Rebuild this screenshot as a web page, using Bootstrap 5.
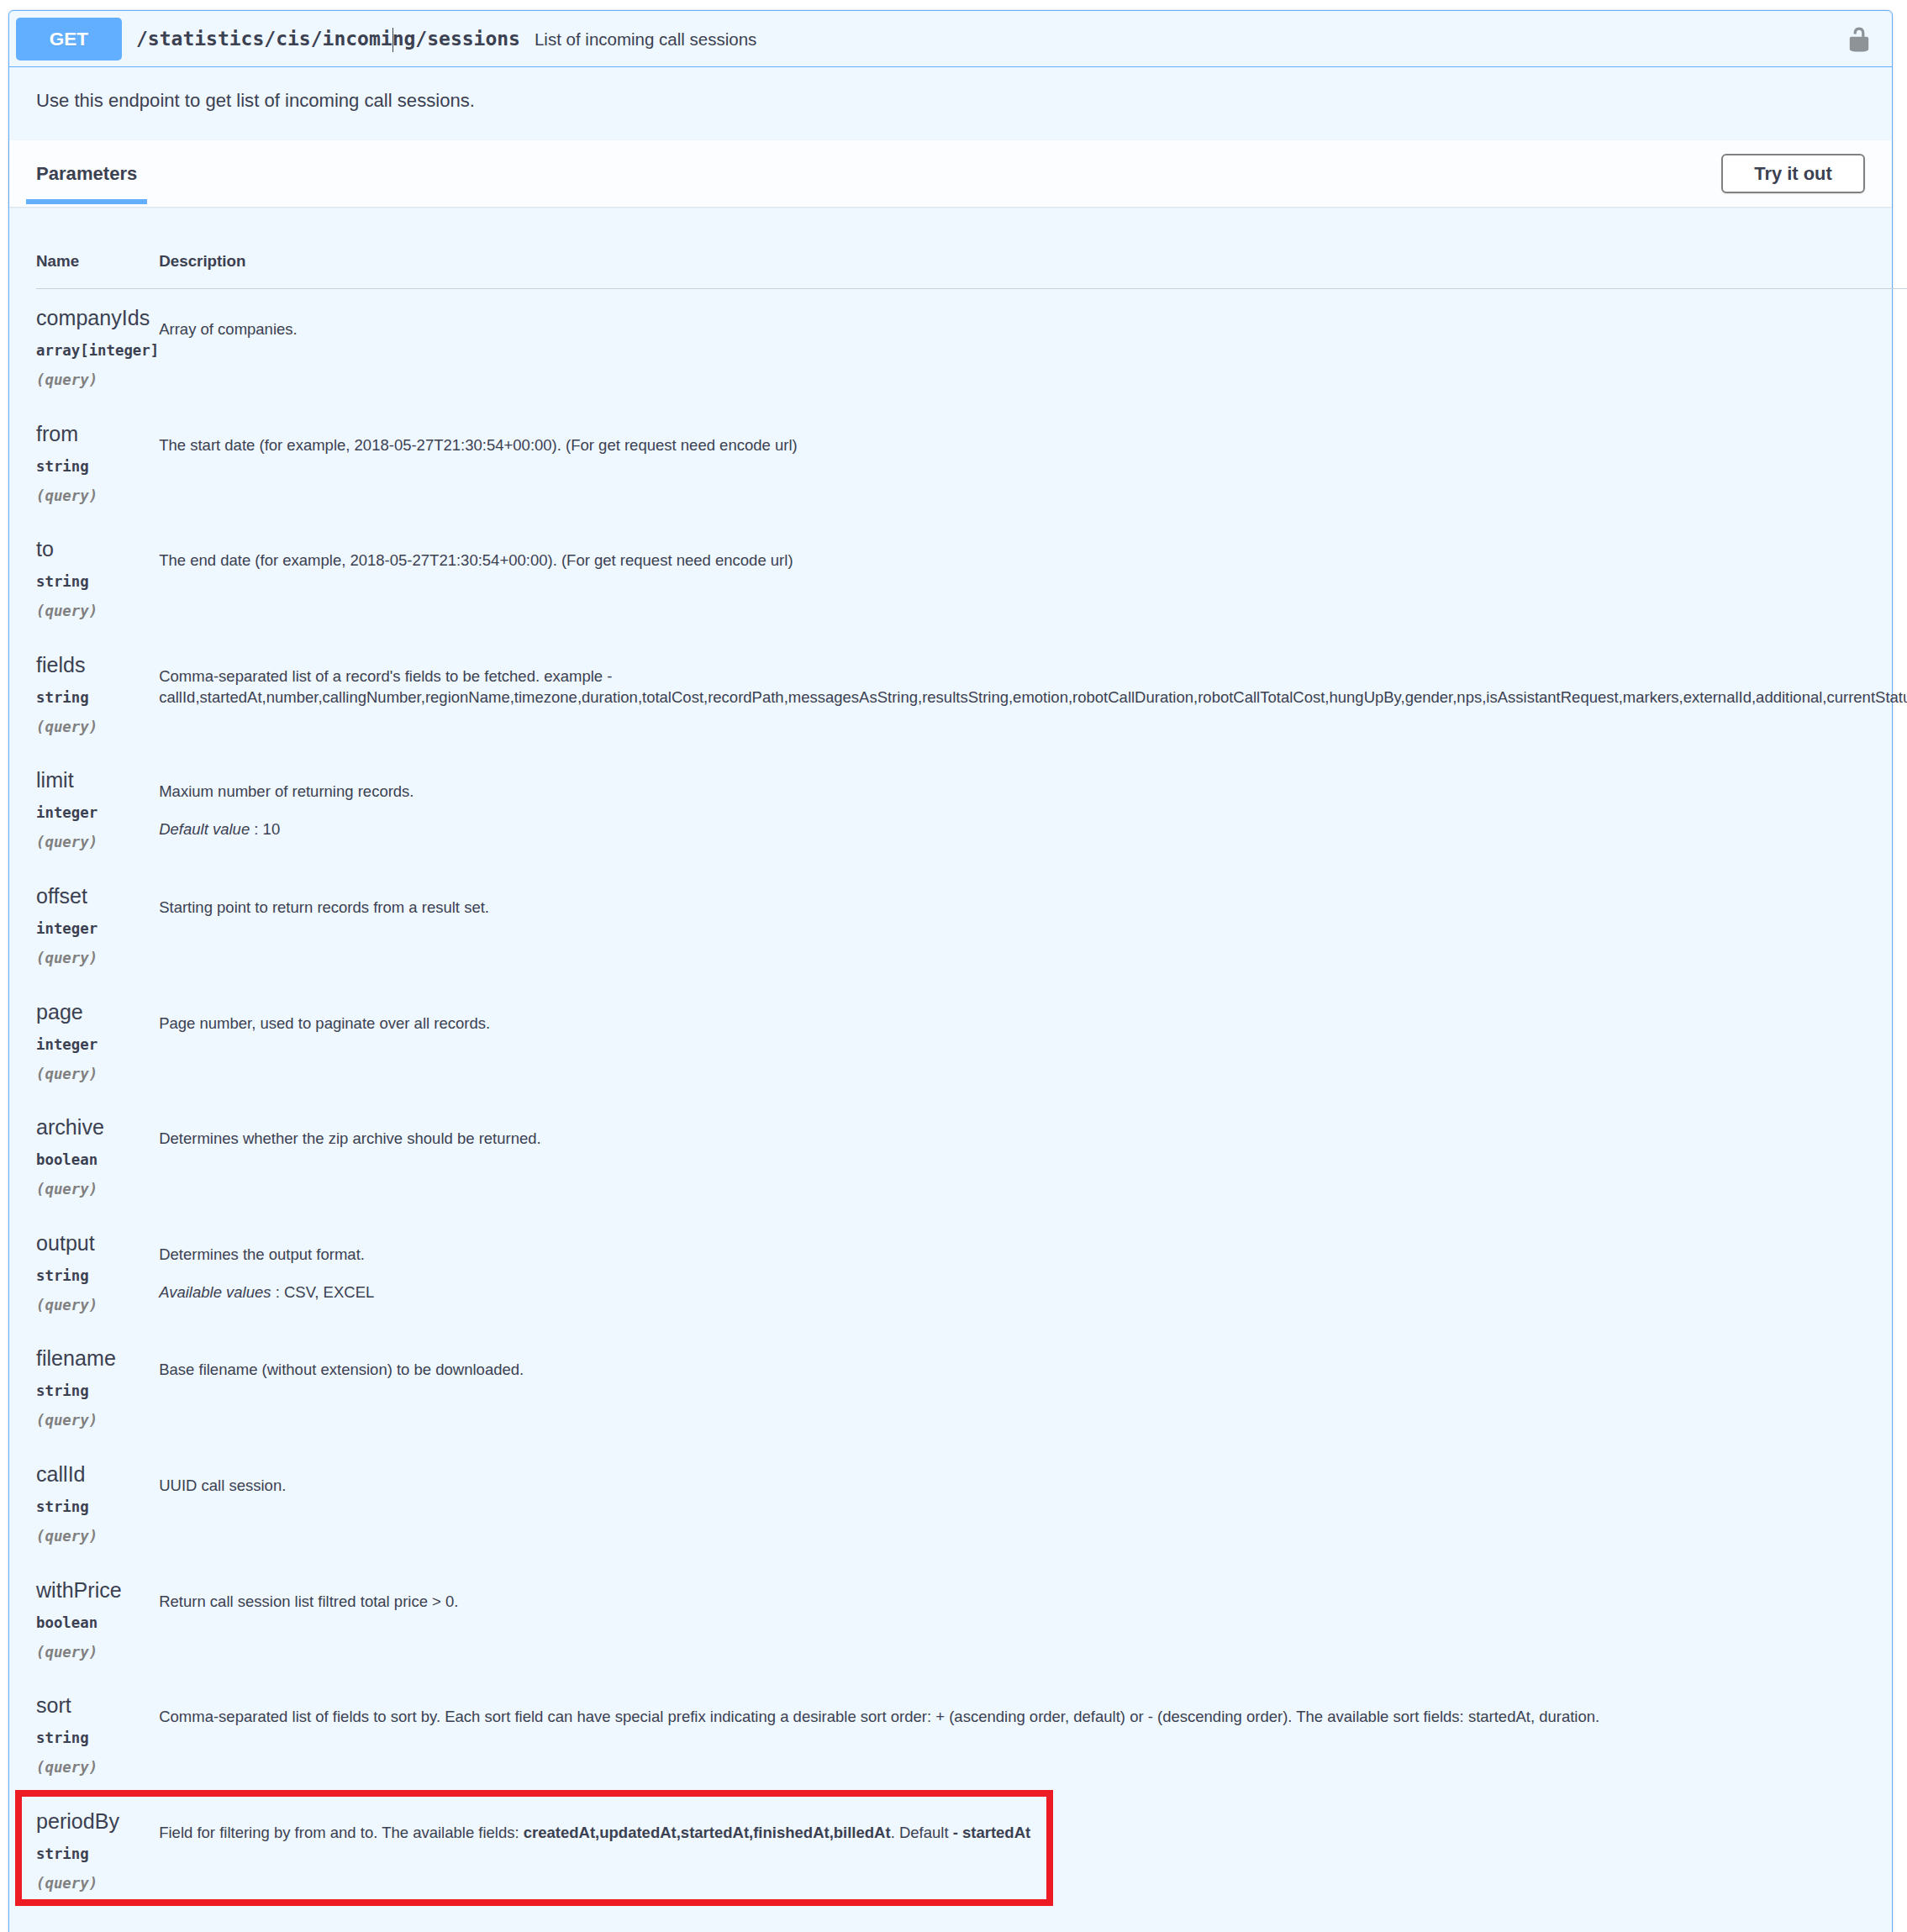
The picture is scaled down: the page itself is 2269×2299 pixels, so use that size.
<!DOCTYPE html>
<html lang="en">
<head>
<meta charset="utf-8">
<title>GET /statistics/cis/incoming/sessions</title>
<link href="https://cdn.jsdelivr.net/npm/bootstrap@5.3.0/dist/css/bootstrap.min.css" rel="stylesheet">
<style>
html, body { height: 2299px; overflow: hidden; background: #fff; }
body { font-family: "Liberation Sans", Arial, sans-serif; color: #3b4151; padding: 12px 17px 0 10px; }
.op-block { position: relative; background: #eff7ff; border: 1px solid #61affe; border-radius: 6px; box-shadow: 0 0 3px rgba(0,0,0,.19); padding-bottom: 120px; }
.op-summary { height: 67px; padding: 8px 23px 7px 8px; border-bottom: 1px solid #61affe; }
.op-method { width: 126px; height: 51px; background: #61affe; color: #fff; border-radius: 5px; font-size: 22.5px; font-weight: 700; text-shadow: 0 1px 0 rgba(0,0,0,.1); }
.op-path { margin-left: 17px; font-family: "DejaVu Sans Mono", monospace; font-weight: 700; font-size: 23px; line-height: 30px; white-space: nowrap; }
.text-caret { display: inline-block; width: 0; height: 29px; margin-right: -1px; border-left: 1px solid #3b4151; vertical-align: middle; }
.op-summary-text { margin-left: 17px; font-size: 20.5px; line-height: 30px; }
.op-lock { width: 32px; height: 32px; fill: #000; opacity: .4; }
.op-intro { padding: 25px 32px 32px; font-size: 22.1px; line-height: 30px; }
.op-tabbar { height: 79px; background: #fcfdff; box-shadow: 0 1px 2px rgba(0,0,0,.1); padding-right: 32px; }
.op-tab { align-self: stretch; margin-left: 20px; margin-bottom: 3px; padding: 9px 12px 0; display: flex; align-items: center; border-bottom: 6px solid #61affe; font-size: 22.1px; font-weight: 700; }
.btn.op-try { width: 171px; height: 47px; padding: 1px 0 0; background: #fff; color: #3b4151; border: 2.5px solid #808080; border-radius: 6px; box-shadow: 0 1px 2px rgba(0,0,0,.1); font-size: 21.9px; font-weight: 700; --bs-btn-hover-bg: #fff; }
.op-params { padding-left: 32px; }
.table.op-table { --bs-table-bg: transparent; --bs-table-color: #3b4151; --bs-table-border-color: transparent; margin: 0; min-width: 2240px; }
.op-table th { padding: 51.5px 0 20.5px; font-size: 18.8px; line-height: 25px; font-weight: 700; border-bottom: 1px solid #c6d0dd; }
.op-table th.col-name, .op-table td.cell-name { width: 145.5px; min-width: 145.5px; }
.op-table td { padding: 0; vertical-align: top; }
.op-table td.cell-name { padding: 12px 0 11.6px; height: 137.6px; }
.op-table td.cell-desc { padding: 35px 0 0; font-size: 18.5px; line-height: 25px; }
.param-name { font-size: 25.1px; line-height: 44px; white-space: nowrap; }
.param-type { font-family: "DejaVu Sans Mono", monospace; font-weight: 700; font-size: 17.35px; line-height: 35px; white-space: nowrap; }
.param-loc { font-family: "DejaVu Sans Mono", monospace; font-weight: 700; font-style: italic; font-size: 17.35px; line-height: 35px; color: #808080; white-space: nowrap; }
.cell-desc p { margin: 0 0 20px; }
.highlight-box { position: absolute; left: 7px; top: 2117px; width: 1235px; height: 138px; border: 8px solid #ed1c24; pointer-events: none; }
</style>
</head>
<body>
<div class="op-block">
  <div class="op-summary d-flex align-items-center">
    <div class="op-method d-flex align-items-center justify-content-center">GET</div>
    <div class="op-path">/statistics/cis/incomi<span class="text-caret"></span>ng/sessions</div>
    <div class="op-summary-text flex-grow-1">List of incoming call sessions</div>
    <svg class="op-lock" viewBox="0 0 20 20" aria-hidden="true"><path d="M15.8 8H14V5.6C14 2.703 12.665 1 10 1 7.334 1 6 2.703 6 5.6V6h2v-.801C8 3.754 8.797 3 10 3c1.203 0 2 .754 2 2.199V8H4c-.553 0-1 .646-1 1.199V17c0 .549.428 1.139.951 1.307l1.197.387C5.672 18.861 6.55 19 7.1 19h5.8c.549 0 1.428-.139 1.951-.307l1.196-.387c.524-.167.953-.757.953-1.306V9.199C17 8.646 16.352 8 15.8 8z"/></svg>
  </div>
  <div class="op-intro">Use this endpoint to get list of incoming call sessions.</div>
  <div class="op-tabbar d-flex align-items-center justify-content-between">
    <div class="op-tab">Parameters</div>
    <button type="button" class="btn op-try">Try it out</button>
  </div>
  <div class="op-params">
    <table class="table table-borderless op-table">
      <thead><tr><th class="col-name">Name</th><th>Description</th></tr></thead>
      <tbody>
        <tr><td class="cell-name"><div class="param-name">companyIds</div><div class="param-type">array[integer]</div><div class="param-loc">(query)</div></td><td class="cell-desc"><p>Array of companies.</p></td></tr>
        <tr><td class="cell-name"><div class="param-name">from</div><div class="param-type">string</div><div class="param-loc">(query)</div></td><td class="cell-desc"><p>The start date (for example, 2018-05-27T21:30:54+00:00). (For get request need encode url)</p></td></tr>
        <tr><td class="cell-name"><div class="param-name">to</div><div class="param-type">string</div><div class="param-loc">(query)</div></td><td class="cell-desc"><p>The end date (for example, 2018-05-27T21:30:54+00:00). (For get request need encode url)</p></td></tr>
        <tr><td class="cell-name"><div class="param-name">fields</div><div class="param-type">string</div><div class="param-loc">(query)</div></td><td class="cell-desc"><p>Comma-separated list of a record's fields to be fetched. example -<br>callId,startedAt,number,callingNumber,regionName,timezone,duration,totalCost,recordPath,messagesAsString,resultsString,emotion,robotCallDuration,robotCallTotalCost,hungUpBy,gender,nps,isAssistantRequest,markers,externalId,additional,currentStatus</p></td></tr>
        <tr><td class="cell-name"><div class="param-name">limit</div><div class="param-type">integer</div><div class="param-loc">(query)</div></td><td class="cell-desc"><p>Maxium number of returning records.</p><p><em>Default value</em> : 10</p></td></tr>
        <tr><td class="cell-name"><div class="param-name">offset</div><div class="param-type">integer</div><div class="param-loc">(query)</div></td><td class="cell-desc"><p>Starting point to return records from a result set.</p></td></tr>
        <tr><td class="cell-name"><div class="param-name">page</div><div class="param-type">integer</div><div class="param-loc">(query)</div></td><td class="cell-desc"><p>Page number, used to paginate over all records.</p></td></tr>
        <tr><td class="cell-name"><div class="param-name">archive</div><div class="param-type">boolean</div><div class="param-loc">(query)</div></td><td class="cell-desc"><p>Determines whether the zip archive should be returned.</p></td></tr>
        <tr><td class="cell-name"><div class="param-name">output</div><div class="param-type">string</div><div class="param-loc">(query)</div></td><td class="cell-desc"><p>Determines the output format.</p><p><em>Available values</em> : CSV, EXCEL</p></td></tr>
        <tr><td class="cell-name"><div class="param-name">filename</div><div class="param-type">string</div><div class="param-loc">(query)</div></td><td class="cell-desc"><p>Base filename (without extension) to be downloaded.</p></td></tr>
        <tr><td class="cell-name"><div class="param-name">callId</div><div class="param-type">string</div><div class="param-loc">(query)</div></td><td class="cell-desc"><p>UUID call session.</p></td></tr>
        <tr><td class="cell-name"><div class="param-name">withPrice</div><div class="param-type">boolean</div><div class="param-loc">(query)</div></td><td class="cell-desc"><p>Return call session list filtred total price &gt; 0.</p></td></tr>
        <tr><td class="cell-name"><div class="param-name">sort</div><div class="param-type">string</div><div class="param-loc">(query)</div></td><td class="cell-desc"><p>Comma-separated list of fields to sort by. Each sort field can have special prefix indicating a desirable sort order: + (ascending order, default) or - (descending order). The available sort fields: startedAt, duration.</p></td></tr>
        <tr><td class="cell-name"><div class="param-name">periodBy</div><div class="param-type">string</div><div class="param-loc">(query)</div></td><td class="cell-desc"><p>Field for filtering by from and to. The available fields: <strong>createdAt,updatedAt,startedAt,finishedAt,billedAt</strong>. Default <strong>- startedAt</strong></p></td></tr>
      </tbody>
    </table>
  </div>
  <div class="highlight-box"></div>
</div>
<script src="https://cdn.jsdelivr.net/npm/bootstrap@5.3.0/dist/js/bootstrap.bundle.min.js"></script>
</body>
</html>
